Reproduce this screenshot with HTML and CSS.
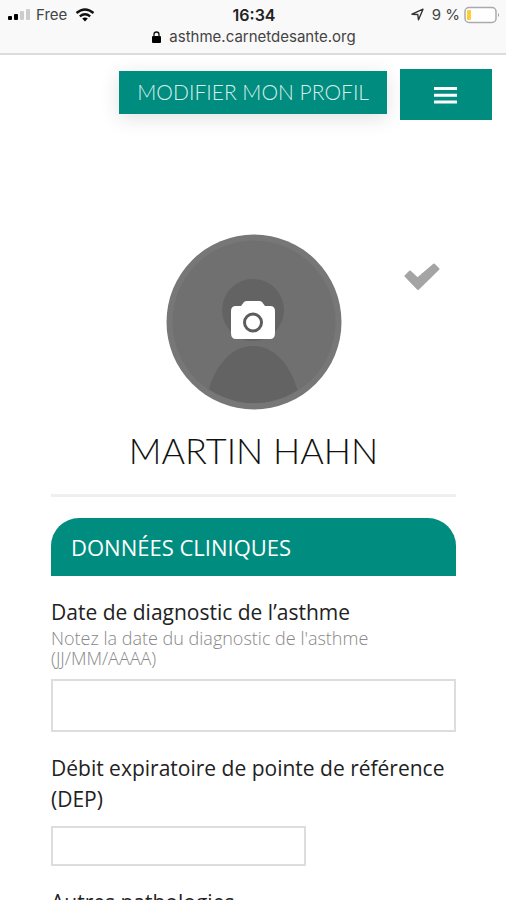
FILE: index.html
```html
<!DOCTYPE html>
<html lang="fr">
<head>
<meta charset="utf-8">
<meta name="viewport" content="width=device-width, initial-scale=1">
<title>Mon profil</title>
<link rel="stylesheet" href="styles.css">
</head>
<body>
<header class="browser">
  <div class="status">
    <div class="carrier">
      <svg width="24" height="12" viewBox="0 0 24 12" aria-hidden="true"><rect y="7" width="4" height="4" rx="1"/><rect x="6" y="5" width="4" height="6" rx="1"/><rect x="12" y="2" width="4" height="9" rx="1" fill="#ccc"/><rect x="18" y="0" width="4" height="11" rx="1" fill="#ccc"/></svg>
      <span>Free</span>
      <svg class="wifi" width="20" height="14" viewBox="0 0 20 14" aria-hidden="true"><path d="M1.500 5Q10-2.200 18.500 5M4.800 8.300Q10 4 15.200 8.300" fill="none" stroke="#111" stroke-width="2.400"/><path d="M7.200 10.500Q10 8.500 12.800 10.500L10 13.500Z"/></svg>
    </div>
    <span class="time">16:34</span>
    <div class="power">
      <svg width="13" height="13" viewBox="0 0 13 13" aria-hidden="true"><path d="M1 6.200L12 1.200L7.500 11.800L6.800 6.500Z" fill="none" stroke="#333" stroke-width="1.400" stroke-linejoin="round"/></svg>
      <span>9 %</span>
      <svg class="battery" width="36" height="18" viewBox="0 0 36 18" aria-hidden="true"><rect x="1" y="1.500" width="31" height="15" rx="4" fill="#fff" stroke="#aaa" stroke-width="1.500"/><rect x="3" y="4" width="4" height="10" rx="1" fill="#fc3"/><path d="M34 7q2 2 0 4z" fill="#999"/></svg>
    </div>
  </div>
  <div class="address">
    <svg width="9" height="12" viewBox="0 0 9 12" aria-hidden="true"><rect y="5" width="9" height="7" rx="1"/><path d="M2 6V3.500a2.500 2.500 0 0 1 5 0V6" fill="none" stroke="#111" stroke-width="1.300"/></svg>
    <span>asthme.carnetdesante.org</span>
  </div>
</header>
<main class="page">
  <nav class="actions">
    <a class="edit" href="#profil">MODIFIER MON PROFIL</a>
    <button class="menu" type="button" aria-label="Menu"><svg width="24" height="18" viewBox="0 0 24 18" aria-hidden="true"><path d="M0 2.500H23M0 9.200H23M0 15.900H23" stroke="#fff" stroke-width="3"/></svg></button>
  </nav>
  <section class="profile" id="profil">
    <div class="portrait">
      <button class="avatar" type="button" aria-label="Photo">
        <svg viewBox="0 0 176 176" aria-hidden="true">
          <defs><clipPath id="disc"><circle cx="88" cy="88" r="81"/></clipPath></defs>
          <circle cx="88" cy="88" r="87.500" fill="#777"/>
          <circle cx="88" cy="88" r="81.500" fill="#707070"/>
          <g clip-path="url(#disc)" fill="#636363"><circle cx="87" cy="76" r="31"/><path d="M42 158C49 132 65 112 87 112S125 132 132 158V176H42Z"/></g>
          <path d="M70 72H75L78 68Q79 67 81 67H93Q95 67 96 68L99 72H104Q109 72 109 77V99Q109 105 104 105H70Q65 105 65 99V77Q65 72 70 72Z" fill="#fff"/>
          <circle cx="87" cy="88.500" r="8.500" fill="none" stroke="#5c5c5c" stroke-width="3"/>
        </svg>
      </button>
      <button class="confirm" type="button" aria-label="Valider"><svg width="36" height="28" viewBox="0 0 36 28" aria-hidden="true"><path d="M1.500 13L6 8.500L13.500 15.500L30 1.500L34.500 6L14 26Z" fill="#a4a4a4" stroke="#a4a4a4" stroke-width="2" stroke-linejoin="round"/></svg></button>
    </div>
    <h1>MARTIN HAHN</h1>
  </section>
  <form class="clinical">
    <h2>DONNÉES CLINIQUES</h2>
    <div class="field">
      <label for="diagnostic">Date de diagnostic de l’asthme</label>
      <p id="aide">Notez la date du diagnostic de l'asthme (JJ/MM/AAAA)</p>
      <input id="diagnostic" type="text" aria-describedby="aide">
    </div>
    <div class="field">
      <label for="dep">Débit expiratoire de pointe de référence (DEP)</label>
      <input class="short" id="dep" type="text">
    </div>
    <div class="field">
      <label for="autres">Autres pathologies</label>
      <input id="autres" type="text">
    </div>
  </form>
</main>
</body>
</html>
```
FILE: styles.css
```css
* { box-sizing: border-box; }
body {
  margin: 0;
  height: 100vh;
  display: flex;
  flex-direction: column;
  background: #fff;
  color: #222;
  font-family: "Open Sans", sans-serif;
}
button { padding: 0; border: 0; background: none; cursor: pointer; }
svg { display: block; }

.browser {
  flex: none;
  padding: 4px 6px 5px 8px;
  background: #f9f9f9;
  border-bottom: 2px solid #dcdcdc;
  font-family: Inter, sans-serif;
  font-size: 15px;
  line-height: 20px;
  color: #444;
}
.status { display: grid; grid-template-columns: 1fr auto 1fr; align-items: center; height: 21px; }
.carrier, .power, .address { display: flex; align-items: center; }
.carrier { gap: 4px; }
.wifi { margin-left: 4px; }
.time { color: #222; font-size: 16px; font-weight: 600; }
.power { justify-content: flex-end; gap: 4px; }
.power span { margin-left: 4px; }
.address { justify-content: center; gap: 8px; height: 23px; }

.page { flex: 1; min-height: 0; overflow: auto; scrollbar-width: none; }
.actions { display: flex; justify-content: flex-end; gap: 13px; padding: 14px 14px 0; }
.edit {
  height: 43px;
  margin-top: 2px;
  padding: 0 18px;
  background: #008c7e;
  box-shadow: 0 4px 20px rgba(0, 0, 0, 0.12);
  color: #d6efec;
  font-family: Lato, sans-serif;
  font-size: 21px;
  font-weight: 300;
  line-height: 42px;
  text-decoration: none;
}
.menu { display: grid; place-items: center; width: 92px; height: 51px; background: #008c7e; }

.profile { margin: 114px 50px 0 51px; border-bottom: 3px solid #efefef; }
.portrait { display: grid; grid-template-columns: 1fr 176px 1fr; }
.avatar { grid-column: 2; width: 176px; height: 176px; border-radius: 50%; }
.confirm { justify-self: end; align-self: start; margin: 29px 16px 0 0; }
h1 {
  margin: 16px 0 20px;
  color: #111;
  font-family: Lato, sans-serif;
  font-size: 36px;
  font-weight: 300;
  line-height: 48px;
  text-align: center;
}

.clinical { margin: 21px 50px 0 51px; padding-bottom: 32px; }
h2 {
  margin: 0 0 21px;
  padding: 14px 20px;
  border-radius: 28px 28px 0 0;
  background: #008c7e;
  color: #fff;
  font-size: 22px;
  font-weight: 400;
  line-height: 30px;
}
.field { margin-bottom: 21px; }
label { display: block; font-size: 21px; font-weight: 400; line-height: 31px; }
p { margin: 0 0 11px; color: #888; font-size: 18px; font-weight: 300; line-height: 20px; }
input {
  display: block;
  width: 100%;
  height: 53px;
  padding: 0 12px;
  border: 2px solid #ddd;
  background: #fff;
  font: inherit;
}
.short { width: 255px; height: 40px; margin-top: 11px; }
```
